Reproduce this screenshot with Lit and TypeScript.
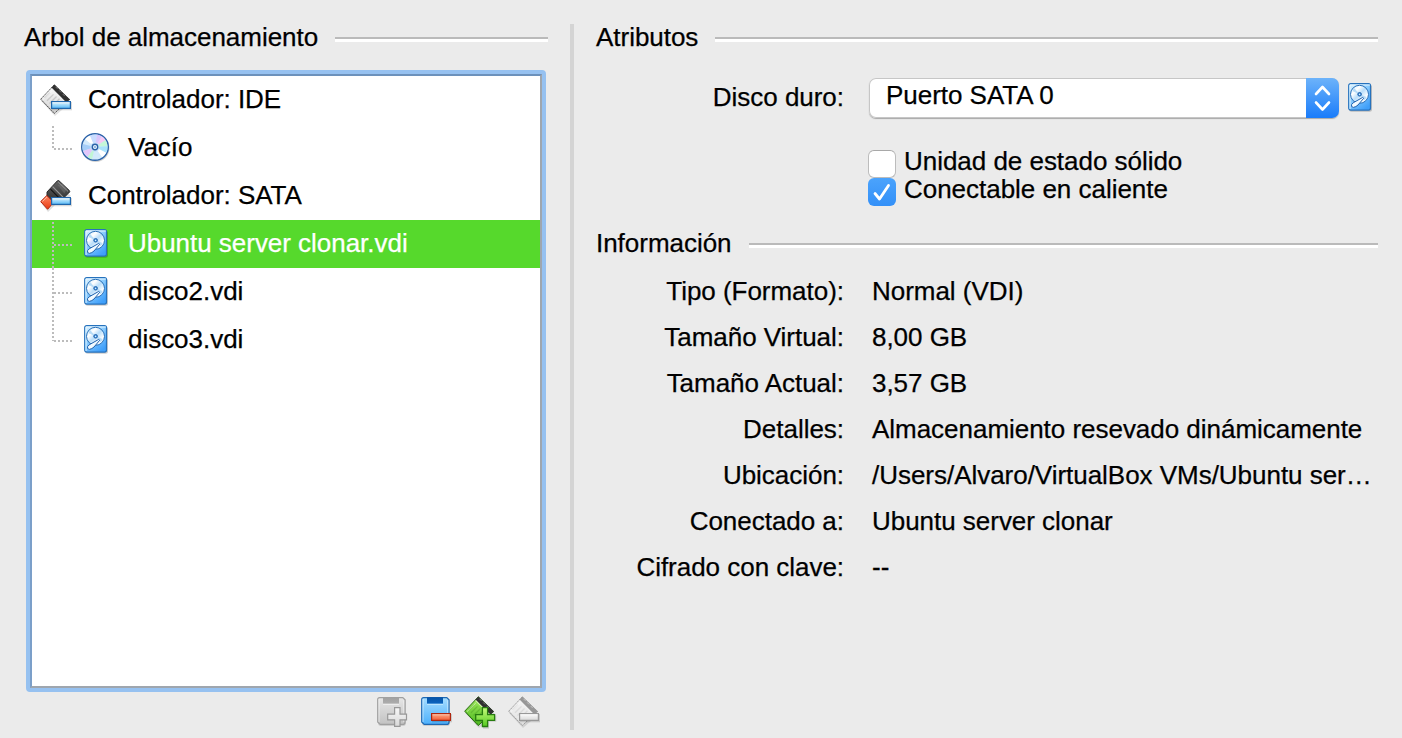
import { LitElement, html, svg, css } from "lit";
import { customElement, property } from "lit/decorators.js";

type Mark = "plus" | "minus";

@customElement("disk-icon")
class DiskIcon extends LitElement {
  static styles = css`:host{display:block;width:26px;height:30px}svg{display:block}`;
  render() {
    return html`<svg width="26" height="30" viewBox="0 0 26 30">
      <defs>
        <linearGradient id="b" x1="0" y1="0" x2=".7" y2="1"><stop offset="0" stop-color="#e2f5ff"/><stop offset=".45" stop-color="#8fcfff"/><stop offset="1" stop-color="#3f9ffa"/></linearGradient>
        <linearGradient id="p" x1="0" y1="0" x2="1" y2="1"><stop offset="0" stop-color="#c4e7fc"/><stop offset=".3" stop-color="#fff"/><stop offset=".5" stop-color="#b9defa"/><stop offset=".75" stop-color="#fff"/><stop offset="1" stop-color="#cdeafd"/></linearGradient>
      </defs>
      <rect x="1.2" y="1.6" width="22.8" height="27.2" rx="2.5" fill="#000" opacity=".2"/>
      <rect x=".7" y=".7" width="21.8" height="26.4" rx="2" fill="url(#b)" stroke="#2672bd" stroke-width="1.2"/>
      <path d="M2 26V2h20" fill="none" stroke="#e9f8ff" stroke-width="1" opacity=".9"/>
      <circle cx="11.5" cy="11.3" r="9" fill="url(#p)" stroke="#2a70b8" stroke-width="1"/>
      <path d="M11.5 11.3 4.4 8a8 8 0 0 1 2-2.8zM11.5 11.3l7.2 2.6a8 8 0 0 1-2.2 3z" fill="#8cc7f2" opacity=".6"/>
      <circle cx="11.6" cy="11.3" r="1.8" fill="#4a9be2" stroke="#1c5aa5" stroke-width=".9"/>
      <circle cx="11.6" cy="11.3" r=".6" fill="#fff"/>
      <path d="M14.5 14.5 5.2 19.8Q2.7 21.6 3.6 23.5 5 25.2 7.8 23.6L10 22l5.7-6.7z" fill="#f2faff" stroke="#1f62ae" stroke-width="1" stroke-linejoin="round"/>
    </svg>`;
  }
}

@customElement("disc-icon")
class DiscIcon extends LitElement {
  static styles = css`:host{display:block;width:30px;height:30px}svg{display:block}`;
  render() {
    return html`<svg width="30" height="30" viewBox="0 0 30 30">
      <circle cx="14.6" cy="15.2" r="13.8" fill="#000" opacity=".18"/>
      <circle cx="14" cy="14" r="13.3" fill="#d2e9fb" stroke="#2b62a8" stroke-width="1.4"/>
      <path d="M14 14 4 6.2A12.5 12.5 0 0 1 9 2.6z" fill="#fff"/>
      <path d="M14 14 9 2.6a12.5 12.5 0 0 1 7-1z" fill="#c9dcff"/>
      <path d="M14 14 16 1.6a12.5 12.5 0 0 1 5 2z" fill="#d9c5fb"/>
      <path d="M14 14 21 3.6a12.5 12.5 0 0 1 3.5 3.6z" fill="#f7c8f4"/>
      <path d="M14 14 24.5 7.2a12.5 12.5 0 0 1 2 6z" fill="#c5f7d8"/>
      <path d="M14 14 26.5 13.2a12.5 12.5 0 0 1-1.4 6.5z" fill="#a9e2fb"/>
      <path d="M14 14 25.1 19.7a12.5 12.5 0 0 1-4 4.6z" fill="#fff"/>
      <path d="M14 14 2.2 18A12.5 12.5 0 0 1 1.8 11z" fill="#a5cdf8"/>
      <path d="M14 14 6.5 24A12.5 12.5 0 0 1 2.2 18z" fill="#e2c7fa"/>
      <path d="M14 14 11 26.2A12.5 12.5 0 0 1 6.5 24z" fill="#c1f5d5"/>
      <circle cx="14" cy="14" r="4.8" fill="#c5e2fa" opacity=".75"/>
      <circle cx="14" cy="14" r="2.7" fill="#f4faff" stroke="#2b62a8" stroke-width="1.4"/>
      <circle cx="14" cy="14" r="1" fill="#78a9da"/>
    </svg>`;
  }
}

const grad = (id: string, a: string, b: string) =>
  svg`<linearGradient id=${id} x1="0" y1="0" x2="0" y2="1"><stop offset="0" stop-color=${a}/><stop offset="1" stop-color=${b}/></linearGradient>`;

@customElement("controller-icon")
class ControllerIcon extends LitElement {
  static styles = css`:host{display:block;width:33px;height:33px}svg{display:block}`;
  @property() kind = "ide";
  render() {
    const k = this.kind;
    const muted = k === "remove";
    const green = k === "add";
    const body = green ? ["#a4ec5e", "#4cb81e"] : muted ? ["#f4f4f4", "#e2e2e2"] : ["#fdfdfd", "#d2d2d2"];
    const edge = green ? "#256a10" : muted ? "#a0a0a0" : "#5a5a5a";
    const side = muted ? "#979797" : "#303030";
    return html`<svg width="33" height="33" viewBox="0 0 33 33">
      <defs>
        ${grad("m", body[0], body[1])}
        ${grad("bar", muted ? "#fcfcfc" : "#e8f9ff", muted ? "#d8d8d8" : "#55b8f6")}
        ${grad("k", "#666", "#2b2b2b")}
        ${grad("r", "#ff8a66", "#e8380f")}
        ${grad("g", "#c6fb7c", "#55ca20")}
      </defs>
      ${k === "sata"
        ? svg`
          <path d="M8 24 18 3l13 13-16 9-7 7-6-8z" opacity=".13"/>
          <path d="M17.4.8q.8-.6 1.6 0L29.4 10.6q.7.8 0 1.6L19 22.6 14 23 7 15.5V12z" fill="url(#k)" stroke="#2b2b2b" stroke-width="1"/>
          <path d="M12.6 6.6 23 17.2" stroke="#999" stroke-width="1.1" fill="none"/>
          <path d="M17.6 5 22.8 3.8 27 8.4 24.4 13.4z" fill="#777" opacity=".45"/>
          <path d="M10.5 9.2 19.5 18.3" stroke="#151515" stroke-width="1.2"/>
          <path d="M18.2 2 28 11.4" stroke="#a5a5a5" stroke-width=".8"/>
          <path d="M.7 21.6 6.8 15.5 13.7 22.3 7.6 29.3z" fill="url(#r)" stroke="#b22610" stroke-width="1" stroke-linejoin="round"/>
          <path d="M2.3 21.6 6.8 17.1" stroke="#ffc0a8" stroke-width="1"/>`
        : svg`
          <path d="M1 17 15 3l16 15-16 14z" opacity=".11"/>
          <path d="M.7 15.2 14.3.8 29.4 15.6 14.2 29.6z" fill="url(#m)" stroke=${edge} stroke-width="1" stroke-dasharray=${green ? "none" : "2 .5"}/>
          <path d="M14.3.4 30 15.6l-4 3.2L11.2 4z" fill=${side}/>
          <path d="M11.6 4.4 26 18.8" stroke=${green ? "#d8ffb0" : "#f4f4f4"} stroke-width="1.1"/>
          <path d="M15.5 2.8l2 2m1.6 1.6 2 2m1.6 1.6 2 2" stroke=${muted ? "#c4c4c4" : "#777"} stroke-width="1"/>
          <path d="M4.5 14 10 8.6M7 16.8l6.5-6.4M9.5 19.5l7-7M12 22.2l7.5-7.4" stroke=${edge} stroke-width="1.3" opacity=".22"/>
          <path d="M3 15.6 11.8 7" stroke="#fff" stroke-width=".9" opacity=".6"/>
          <path d="M2.8 17.4 14.2 28.4" stroke=${edge} stroke-width="1" opacity=".5" stroke-dasharray="1 1.4"/>`}
      ${green
        ? svg`<path d="M19 12.5h6v7h7.3v6.3H25v7h-6v-7h-7v-6.3h7z" opacity=".13"/>
          <path d="M18.4 11.7h5.2v7h7v5.6h-7v6.2h-5.2v-6.2h-6.7v-5.6h6.7z" fill="url(#g)" stroke="#277c10" stroke-width="1.3"/>`
        : svg`<rect x="12" y="18" width="20" height="8.3" opacity=".15"/>
          <rect x="11.6" y="17.6" width="18.8" height="6.8" fill="url(#bar)" stroke=${muted ? "#989898" : "#1f66ac"} stroke-width="1.2"/>
          <path d="M12.5 18.8h17" stroke="#fff" stroke-width=".9" opacity=".8"/>`}
    </svg>`;
  }
}

@customElement("floppy-icon")
class FloppyIcon extends LitElement {
  static styles = css`:host{display:block;width:33px;height:33px}svg{display:block}`;
  @property() mark: Mark = "plus";
  render() {
    const on = this.mark === "minus";
    return html`<svg width="33" height="33" viewBox="0 0 33 33">
      <defs>
        ${grad("f", on ? "#a6ddff" : "#e6e6e6", on ? "#4db0fc" : "#c2c2c2")}
        ${grad("t", on ? "#0753a6" : "#a0a0a0", on ? "#0a64c0" : "#adadad")}
        ${grad("p", "#f8f8f8", "#d8d8d8")}
        ${grad("q", "#ffb08f", "#f05a32")}
      </defs>
      <rect x="1" y="2.2" width="28" height="27.8" rx="3" opacity=".13"/>
      <path d="M2.6 1.6h23.2l2.2 2.2v22.4q0 2.2-2.2 2.2H3.2L.7 26V3.6q0-2 1.9-2z" fill="url(#f)" stroke=${on ? "#1f69b4" : "#a0a0a0"} stroke-width="1.2"/>
      <path d="M2 26V3M26.8 26V4.4" stroke="#fff" opacity=".5"/>
      <path d="M6 1.2h16v6.6H6z" fill="url(#t)"/>
      <path d="M6 8.3h16" stroke=${on ? "#c4e9ff" : "#f2f2f2"}/>
      ${on
        ? svg`<rect x="11" y="18" width="20" height="8.3" opacity=".15"/>
          <rect x="10.6" y="17.6" width="18.8" height="6.8" fill="url(#q)" stroke="#b0260f" stroke-width="1.2"/>
          <path d="M11.5 18.8h17" stroke="#ffd0bd" stroke-width=".9" opacity=".8"/>`
        : svg`<path d="M17.6 11.6h5.4v6.6h6.5v5.6h-6.5v6.6h-5.4v-6.6h-6.9v-5.6h6.9z" fill="url(#p)" stroke="#989898" stroke-width="1.2"/>`}
    </svg>`;
  }
}

interface Node { name: string; icon: string; child?: boolean; first?: boolean; last?: boolean; selected?: boolean; }

const tree: Node[] = [
  { name: "Controlador: IDE", icon: "ide" },
  { name: "Vacío", icon: "disc", child: true, first: true, last: true },
  { name: "Controlador: SATA", icon: "sata" },
  { name: "Ubuntu server clonar.vdi", icon: "disk", child: true, first: true, selected: true },
  { name: "disco2.vdi", icon: "disk", child: true },
  { name: "disco3.vdi", icon: "disk", child: true, last: true },
];

const info = [
  ["Tipo (Formato):", "Normal (VDI)"],
  ["Tamaño Virtual:", "8,00 GB"],
  ["Tamaño Actual:", "3,57 GB"],
  ["Detalles:", "Almacenamiento resevado dinámicamente"],
  ["Ubicación:", "/Users/Alvaro/VirtualBox VMs/Ubuntu ser…"],
  ["Conectado a:", "Ubuntu server clonar"],
  ["Cifrado con clave:", "--"],
];

@customElement("app-root")
class AppRoot extends LitElement {
  static styles = css`
    :host { display: block; }
    * { box-sizing: border-box; }
    .page { width: 1402px; height: 738px; background: #ebebeb; display: grid; grid-template-columns: 546px 4px 782px; column-gap: 24px; overflow: hidden;
      font: 26px/30px "Liberation Sans", Arial, sans-serif; letter-spacing: -0.03px; -webkit-text-stroke: 0.25px currentColor; color: #000; white-space: nowrap; }
    .left { padding-left: 24px; width: 548px; display: flex; flex-direction: column; }
    .divider { background: #d4d4d4; margin: 24px 0 8px; }
    .right { margin-left: -2px; width: 782px; }
    .heading { display: flex; align-items: center; gap: 17px; height: 30px; margin-top: 22px; }
    .rule { flex: 1; height: 5px; border-top: 2px solid #bababa; border-bottom: 3px solid #fff; margin-top: 5px; }
    .tree { margin: 18px 0 0 2px; width: 520px; height: 622px; border: 4px solid #96c1f0; border-radius: 4px; background: #96c1f0; }
    .rows { height: 614px; background: #fff; border: 2px solid #9fa6ae; border-top-color: #6c91bb; border-left-color: #7b9fc9; }
    .row { height: 48px; display: flex; align-items: center; }
    .row.top { padding-left: 8px; gap: 15px; }
    .row.selected { background: #56d92c; color: #fff; }
    .branch { width: 40px; height: 48px; flex: none; margin-right: 9px; }
    .slot { width: 47px; flex: none; }
    .slot.disk { padding-left: 3px; }
    .name { position: relative; top: -1px; }
    .actions { display: flex; gap: 11px; padding: 4px 0 0 353px; }
    .actions .add { margin-left: -1px; }
    .device { display: grid; grid-template-columns: 248px 471px 26px; align-items: start; height: 40px; margin-top: 26px; }
    .lbl { text-align: right; }
    .device .lbl { padding-top: 4px; }
    .combo { margin-left: 25px; width: 470px; height: 40px; display: flex; border-radius: 7px; background: #fff; box-shadow: inset 0 0 0 1px #c6c6c6, 0 1px 1px #a8a8a8; overflow: hidden; }
    .combo .value { flex: 1; padding: 2px 0 0 17px; }
    .step { width: 33px; height: 40px; background: linear-gradient(#6db3fa, #1a7cfa); }
    .device disk-icon { margin: 5px 0 0 33px; }
    .checks { margin: 32px 0 0 272px; }
    .check { display: flex; height: 28px; gap: 8px; line-height: 22px; }
    .box { width: 28px; height: 28px; border-radius: 6px; background: #fff; border: 1px solid #bcbcbc; border-top-color: #a8a8a8; flex: none; }
    .box.on { border: 0; background: linear-gradient(#4ba3fc, #3390f8); }
    .second { margin-top: 22px; }
    .info { display: grid; grid-template-columns: 248px 1fr; column-gap: 28px; row-gap: 16px; margin-top: 18px; }
  `;

  branch(n: Node) {
    return html`<svg class="branch" viewBox="0 0 40 48">
      <path d=${`M21 ${n.first ? 2 : 0}V${n.last ? 25 : 48}M22 25H40`} stroke="#bcbcbc" stroke-width="2" stroke-dasharray="2 2" fill="none"/></svg>`;
  }

  row(n: Node) {
    if (!n.child) return html`<div class="row top"><controller-icon .kind=${n.icon}></controller-icon><span class="name">${n.name}</span></div>`;
    return html`<div class="row ${n.selected ? "selected" : ""}">${this.branch(n)}
      <div class="slot ${n.icon}">${n.icon === "disk" ? html`<disk-icon></disk-icon>` : html`<disc-icon></disc-icon>`}</div>
      <span class="name">${n.name}</span></div>`;
  }

  render() {
    return html`<main class="page">
      <section class="left">
        <div class="heading"><span>Arbol de almacenamiento</span><span class="rule"></span></div>
        <div class="tree"><div class="rows">${tree.map((n) => this.row(n))}</div></div>
        <div class="actions">
          <floppy-icon mark="plus"></floppy-icon><floppy-icon mark="minus"></floppy-icon>
          <controller-icon class="add" kind="add"></controller-icon><controller-icon kind="remove"></controller-icon>
        </div>
      </section>
      <div class="divider"></div>
      <section class="right">
        <div class="heading"><span>Atributos</span><span class="rule"></span></div>
        <div class="device">
          <span class="lbl">Disco duro:</span>
          <div class="combo"><span class="value">Puerto SATA 0</span>
            <svg class="step" viewBox="0 0 33 40"><path d="M10 16l6.5-7 6.5 7M10 24.5l6.5 7 6.5-7" fill="none" stroke="#fff" stroke-width="2.6" stroke-linecap="round" stroke-linejoin="round"/></svg>
          </div>
          <disk-icon></disk-icon>
        </div>
        <div class="checks">
          <div class="check"><span class="box"></span><span>Unidad de estado sólido</span></div>
          <div class="check"><svg class="box on" viewBox="0 0 28 28"><path d="M7 15.5l4.5 5.5L20.5 7.5" fill="none" stroke="#fff" stroke-width="2.8" stroke-linecap="round" stroke-linejoin="round"/></svg><span>Conectable en caliente</span></div>
        </div>
        <div class="heading second"><span>Información</span><span class="rule"></span></div>
        <div class="info">${info.map(([a, b]) => html`<span class="lbl">${a}</span><span>${b}</span>`)}</div>
      </section>
    </main>`;
  }
}
